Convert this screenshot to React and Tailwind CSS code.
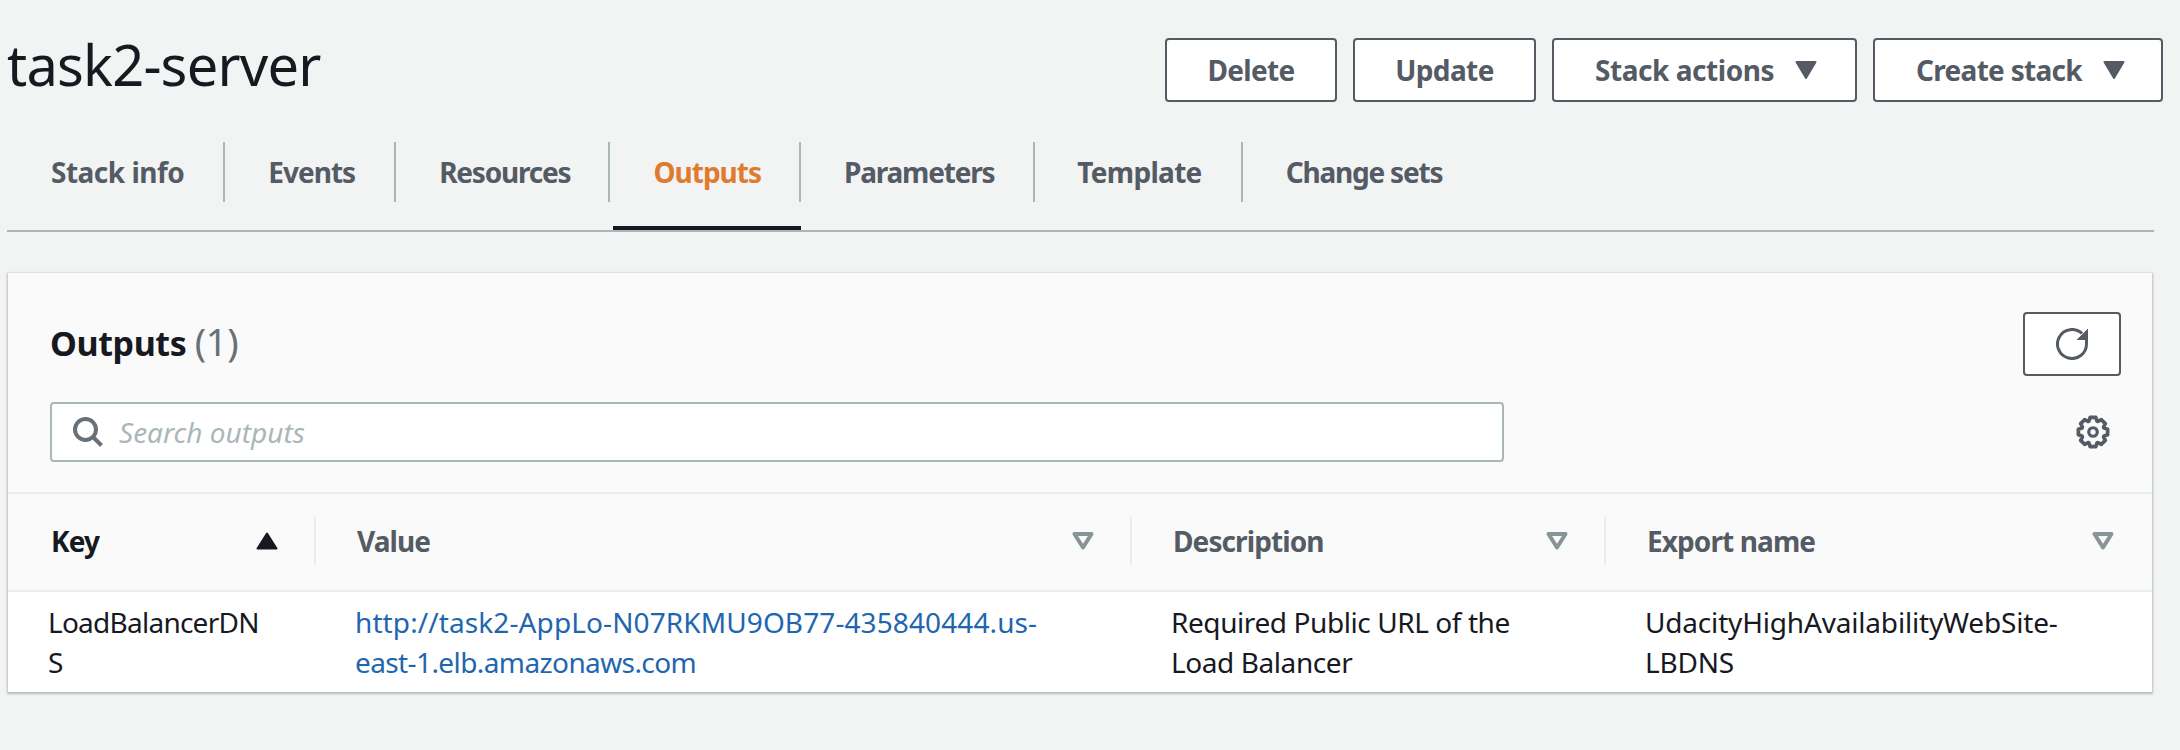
const gearPoints = (() => {
  const pts = [];
  const n = 8;
  for (let i = 0; i < n; i++) {
    const a = (i * 2 * Math.PI) / n - Math.PI / 2;
    const step = (2 * Math.PI) / n;
    const p = (r, d) => `${(16 + r * Math.cos(a + d * step)).toFixed(2)},${(16 + r * Math.sin(a + d * step)).toFixed(2)}`;
    pts.push(p(11, -0.44), p(14, -0.24), p(14, 0.24), p(11, 0.44));
  }
  return pts.join(" ");
})();

const tabs = [
  { label: "Stack info", cls: "tracking-[-0.5px] text-[#545b64] pl-[44px] pr-[39px] border-r-2 border-[#aab7b8]" },
  { label: "Events", cls: "tracking-[-1px] text-[#545b64] pl-[43px] pr-[39px] border-r-2 border-[#aab7b8]" },
  { label: "Resources", cls: "tracking-[-1.2px] text-[#545b64] pl-[43px] pr-[38px] border-r-2 border-[#aab7b8]" },
  { label: "Outputs", active: true, cls: "tracking-[-1px] text-[#e07a2f] pl-[40px] pr-[38px] border-r-2 border-[#aab7b8]" },
  { label: "Parameters", cls: "tracking-[-1.2px] text-[#545b64] pl-[43px] pr-[39px] border-r-2 border-[#aab7b8]" },
  { label: "Template", cls: "tracking-[-0.7px] text-[#545b64] pl-[42px] pr-[39px] border-r-2 border-[#aab7b8]" },
  { label: "Change sets", cls: "tracking-[-1.2px] text-[#545b64] pl-[43px] pr-[40px]" },
];

function Caret() {
  return (
    <svg width="22" height="18" viewBox="0 0 22 18" className="shrink-0">
      <path d="M1.5 1h19L11 17z" fill="#545b64" stroke="#545b64" strokeWidth="2" strokeLinejoin="round" />
    </svg>
  );
}

function Button({ children, caret, className }) {
  return (
    <button className={`h-16 flex items-center justify-center gap-[21px] bg-white border-2 border-[#545b64] rounded-[4px] text-[28px] font-bold text-[#545b64] ${className}`}>
      <span>{children}</span>
      {caret && <Caret />}
    </button>
  );
}

function FilterIcon() {
  return (
    <svg width="22" height="18" viewBox="0 0 22 18" className="shrink-0">
      <path d="M2.5 2h17L11 15.5z" fill="none" stroke="#879596" strokeWidth="4" strokeLinejoin="round" />
    </svg>
  );
}

function HeaderCell({ label, strong, icon, sep = true, className }) {
  return (
    <div className={`h-12 flex items-center justify-between ${sep ? "border-r-2 border-[#eaeded]" : ""} ${className}`}>
      <span className={`text-[28px] font-bold tracking-[-0.9px] ${strong ? "text-[#16191f]" : "text-[#545b64]"}`}>{label}</span>
      {icon}
    </div>
  );
}

export default function App() {
  return (
    <div className="w-[2180px] h-[750px] bg-[#f2f3f3] font-['Noto_Sans',sans-serif] text-[#16191f] overflow-hidden">
      <header className="flex items-start justify-between pl-[7px] pr-[17px] pt-[38px] h-[142px]">
        <h1 className="text-[56px] leading-[52px] font-normal tracking-[-0.8px] text-[#16191f]">task2-server</h1>
        <div className="flex gap-4">
          <Button className="w-[172px] tracking-[-0.7px]">Delete</Button>
          <Button className="w-[183px] tracking-[-0.6px]">Update</Button>
          <Button className="w-[305px] pl-[3px] tracking-[-0.45px]" caret>Stack actions</Button>
          <Button className="w-[290px] pl-[5px] tracking-[-0.7px]" caret>Create stack</Button>
        </div>
      </header>

      <nav className="mx-[7px] w-[2147px] h-[88px] border-b-2 border-[#aab7b8] flex items-start box-content">
        {tabs.map((t) => (
          <div key={t.label} className={t.active ? "h-[88px] ml-[3px] border-b-4 border-[#16191f]" : "h-[88px]"}>
            <div className={`h-[60px] flex items-center text-[28px] font-bold ${t.cls}`}>{t.label}</div>
          </div>
        ))}
      </nav>

      <section className="mt-[41px] mx-2 w-[2144px] bg-[#fafafa] shadow-[0_1px_2px_1px_rgba(0,28,36,0.25)]">
        <div className="h-[221px] border-b-2 border-[#eaeded] flex flex-col pl-[42px] pr-[31px]">
          <div className="flex items-start justify-between pt-[39px]">
            <h2 className="text-[34px] leading-[58px] font-bold tracking-[-0.4px] text-[#16191f]">
              Outputs <span className="text-[38px] font-normal text-[#687078]">(1)</span>
            </h2>
            <button className="w-[98px] h-16 bg-white border-2 border-[#545b64] rounded-[4px] flex items-center justify-center">
              <svg width="32" height="32" viewBox="0 0 32 32">
                <path d="M30.5 12V16A14.5 14.5 0 1 1 26 5.5" fill="none" stroke="#545b64" strokeWidth="3" />
                <path d="M32 0.5V12H20.5z" fill="#545b64" />
              </svg>
            </button>
          </div>
          <div className="mt-[26px] flex items-center justify-between">
            <div className="w-[1454px] h-[60px] bg-white border-2 border-[#aab7b8] rounded-[4px] flex items-center pl-[20px] gap-[15px]">
              <svg width="32" height="32" viewBox="0 0 32 32" className="shrink-0">
                <circle cx="13.5" cy="13.5" r="10.5" fill="none" stroke="#687078" strokeWidth="4" />
                <path d="M21 21l8.5 8.5" stroke="#687078" strokeWidth="4" />
              </svg>
              <span className="text-[28px] italic text-[#aab7b8]">Search outputs</span>
            </div>
            <svg width="34" height="34" viewBox="0 0 32 32" className="mr-[11px]">
              <polygon points={gearPoints} fill="none" stroke="#545b64" strokeWidth="3.5" strokeLinejoin="round" />
              <circle cx="16" cy="16" r="4" fill="none" stroke="#545b64" strokeWidth="3" />
            </svg>
          </div>
        </div>

        <div className="grid grid-cols-[308px_816px_474px_546px] h-[98px] pt-[23px] border-b-2 border-[#eaeded]">
          <HeaderCell label="Key" strong className="pl-[43px] pr-[36px]" icon={
            <svg width="22" height="18" viewBox="0 0 22 18"><path d="M1.5 16.5h19L11 1.5z" fill="#16191f" stroke="#16191f" strokeWidth="2" strokeLinejoin="round" /></svg>
          } />
          <HeaderCell label="Value" className="pl-[41px] pr-[36px]" icon={<FilterIcon />} />
          <HeaderCell label="Description" className="pl-[41px] pr-[36px]" icon={<FilterIcon />} />
          <HeaderCell label="Export name" sep={false} className="pl-[41px] pr-[38px]" icon={<FilterIcon />} />
        </div>

        <div className="grid grid-cols-[308px_816px_474px_546px] bg-white py-[10px] text-[28px] leading-[40px] text-[#16191f]">
          <div className="pl-[40px] pr-[50px] break-all tracking-[-0.75px]">LoadBalancerDNS</div>
          <div className="pl-[39px] pr-[40px]">
            <a className="text-[#1f66b0]">
              <span className="tracking-[0.1px]">http://task2-AppLo-N07RKMU9OB77-435840444.us-</span>
              <span className="tracking-[-0.6px]">east-1.elb.amazonaws.com</span>
            </a>
          </div>
          <div className="pl-[39px] pr-[60px] tracking-[-0.42px]">Required Public URL of the Load Balancer</div>
          <div className="pl-[39px] pr-[30px] tracking-[-0.18px]">UdacityHighAvailabilityWebSite-LBDNS</div>
        </div>
      </section>
    </div>
  );
}
